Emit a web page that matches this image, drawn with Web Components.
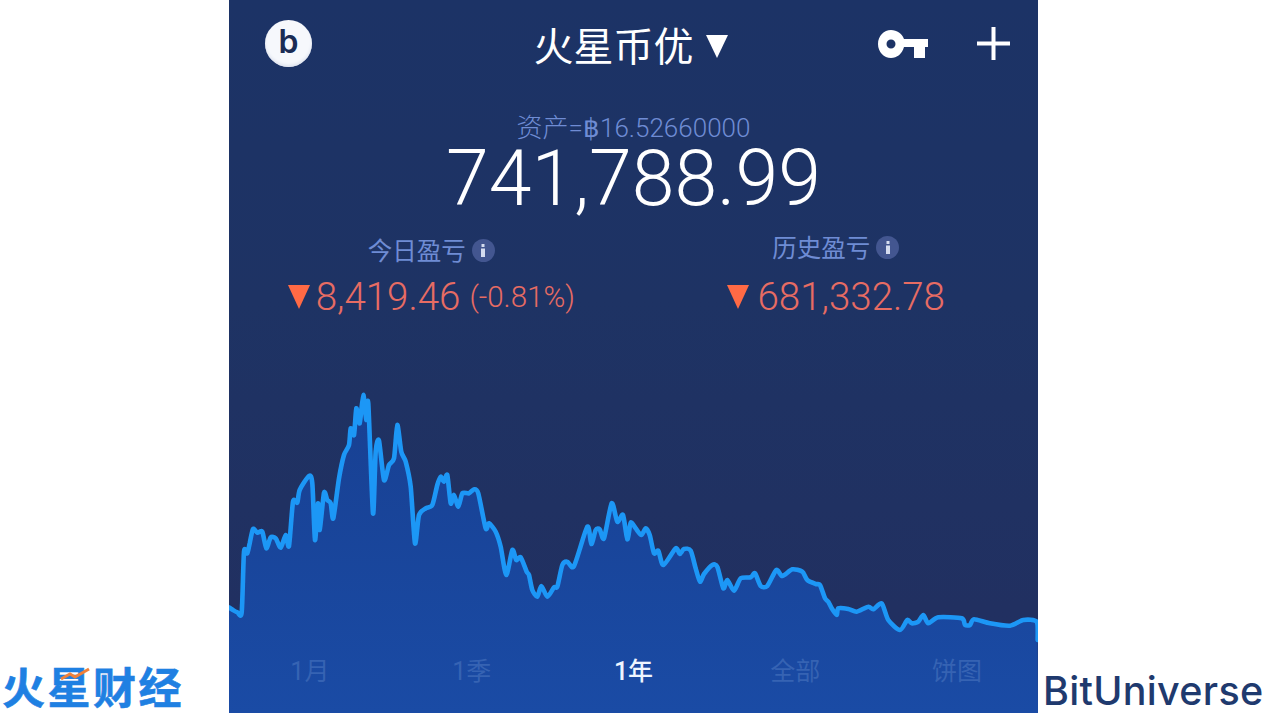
<!DOCTYPE html>
<html lang="zh">
<head>
<meta charset="utf-8">
<title>火星币优</title>
<style>
  html, body { margin: 0; height: 100%; background: #fff; overflow: hidden; }
  body { font-family: Roboto, "Noto Sans CJK SC", sans-serif; }
</style>
</head>
<body>
<asset-page>
  <mars-logo slot="left">火星财经</mars-logo>
  <phone-screen>
    <top-bar title="火星币优"></top-bar>
    <asset-summary btc="资产=฿16.52660000" total="741,788.99"></asset-summary>
    <pnl-row>
      <pnl-stat label="今日盈亏" value="8,419.46" pct="(-0.81%)"></pnl-stat>
      <pnl-stat label="历史盈亏" value="681,332.78" raised></pnl-stat>
    </pnl-row>
    <area-chart>
      <range-tabs></range-tabs>
    </area-chart>
  </phone-screen>
  <bit-logo slot="right">BitUniverse</bit-logo>
</asset-page>

<script>
// Page frame: white sides with the phone shot in the middle
class AssetPage extends HTMLElement {
  constructor() {
    super();
    this.attachShadow({ mode: "open" });
    this.shadowRoot.innerHTML = `
      <style>
        :host { display: grid; grid-template-columns: 229px 809px 229px; height: 713px; }
        .side { display: flex; align-items: flex-end; min-width: 0; }
      </style>
      <div class="side"><slot name="left"></slot></div>
      <slot></slot>
      <div class="side"><slot name="right"></slot></div>`;
  }
}

class MarsLogo extends HTMLElement {
  constructor() {
    super();
    this.attachShadow({ mode: "open" });
    this.shadowRoot.innerHTML = `
      <style>
        :host {
          display: block; position: relative; padding-left: 2px; height: 55px;
          font: 700 43px/63px "Liberation Sans", "Noto Sans CJK SC", sans-serif;
          letter-spacing: 2.5px; color: #1f80e2; white-space: nowrap;
          -webkit-text-stroke: 0.6px #1f80e2;
        }
        svg { position: absolute; left: 58px; top: 9px; }
      </style>
      <slot></slot>
      <svg width="34" height="14" viewBox="0 0 34 14">
        <path d="M3 12 L12 7 L17 10 L31 2" fill="none" stroke="#f0813a" stroke-width="3"/>
      </svg>`;
  }
}

class BitLogo extends HTMLElement {
  constructor() {
    super();
    this.attachShadow({ mode: "open" });
    this.shadowRoot.innerHTML = `
      <style>
        :host {
          display: block; padding-left: 5px; height: 44px;
          font: 500 39.500px/45px Inter, "Liberation Sans", sans-serif; letter-spacing: 0.3px;
          color: #1f3a6e; white-space: nowrap;
        }
      </style>
      <slot></slot>`;
  }
}

class PhoneScreen extends HTMLElement {
  constructor() {
    super();
    this.attachShadow({ mode: "open" });
    this.shadowRoot.innerHTML = `
      <style>
        :host {
          display: flex; flex-direction: column; height: 713px; overflow: hidden;
          background: linear-gradient(#1c3366, #1e3364 300px, #222f60);
          font-family: Roboto, "Noto Sans CJK SC", sans-serif;
        }
        ::slotted(area-chart) { margin-top: auto; }
      </style>
      <slot></slot>`;
  }
}

class TopBar extends HTMLElement {
  constructor() {
    super();
    this.attachShadow({ mode: "open" });
    this.shadowRoot.innerHTML = `
      <style>
        :host {
          display: grid; grid-template-columns: 1fr auto 1fr; align-items: center;
          height: 87px; padding: 0 28px 0 36px; color: #fff;
        }
        .avatar {
          width: 47px; height: 47px; border-radius: 50%; background: #f6f8fc; color: #1a2c55;
          display: flex; align-items: center; justify-content: center;
          font: 600 32px/1 Inter, sans-serif; padding-bottom: 3px; box-sizing: border-box;
          box-shadow: inset 0 -2px 3px #dfe4ef;
        }
        .title { display: flex; align-items: center; gap: 12px; font-size: 40px; line-height: 50px; font-family: "Noto Sans CJK SC", sans-serif; font-weight: 400; margin-left: -14px; }
        .title svg { margin-top: 5px; }
        .actions { display: flex; justify-content: flex-end; align-items: center; gap: 49px; }
        svg { display: block; }
      </style>
      <div><div class="avatar">b</div></div>
      <div class="title"><span>${this.getAttribute("title")}</span>
        <svg width="22" height="24" viewBox="0 0 22 24"><path d="M0 1H22L11 24Z" fill="#fff"/></svg>
      </div>
      <div class="actions">
        <svg width="50" height="28" viewBox="0 0 50 28">
          <path fill="#fff" fill-rule="evenodd" d="M13 0C19 0 24 3.500 26 9H50V17H47V28H36V17H26C24 24 19 28 13 28C6 28 0 22 0 14S6 0 13 0ZM13 9.500A4.500 4.500 0 1 0 13 18.500A4.500 4.500 0 1 0 13 9.500Z"/>
        </svg>
        <svg width="33" height="33" viewBox="0 0 33 33"><path d="M16.500 0V33M0 16.500H33" stroke="#fff" stroke-width="4"/></svg>
      </div>`;
  }
}

class AssetSummary extends HTMLElement {
  constructor() {
    super();
    this.attachShadow({ mode: "open" });
    this.shadowRoot.innerHTML = `
      <style>
        :host { display: block; text-align: center; height: 146px; }
        .btc { font: 300 26px/32px Roboto, "Noto Sans CJK SC", sans-serif; color: #6f8cd4; padding-top: 25px; margin-bottom: -1px; }
        .total { font: 300 77px/72px Roboto, sans-serif; color: #fff; }
      </style>
      <div class="btc">${this.getAttribute("btc")}</div>
      <div class="total">${this.getAttribute("total")}</div>`;
  }
}

class PnlRow extends HTMLElement {
  constructor() {
    super();
    this.attachShadow({ mode: "open" });
    this.shadowRoot.innerHTML = `
      <style>:host { display: grid; grid-template-columns: 1fr 1fr; }</style>
      <slot></slot>`;
  }
}

class PnlStat extends HTMLElement {
  constructor() {
    super();
    this.attachShadow({ mode: "open" });
    const pct = this.getAttribute("pct");
    this.shadowRoot.innerHTML = `
      <style>
        :host { display: flex; flex-direction: column; align-items: center; color: #e76c63; }
        .label {
          display: flex; align-items: center; gap: 6px; height: 34px; color: #6f8cd4;
          font: 400 24.500px/34px "Noto Sans CJK SC", sans-serif;
          ${this.hasAttribute("raised") ? "margin-top: -3px; margin-bottom: 3px;" : ""}
        }
        .dot {
          width: 23px; height: 23px; border-radius: 50%; background: #435690;
          display: flex; align-items: center; justify-content: center;
        }
        .value { display: flex; align-items: center; height: 54px; margin-top: 3px; white-space: nowrap; }
        .num { font: 300 38.500px/54px Roboto, sans-serif; margin-left: 6px; }
        .raised { margin-left: 9px; }
        .pct { font: 300 29.500px/54px Roboto, sans-serif; margin-left: 9px; }
      </style>
      <div class="label"><span>${this.getAttribute("label")}</span>
        <span class="dot"><svg width="6" height="13" viewBox="0 0 6 13"><path fill="#d5dcef" d="M1.500 0h3v3h-3zM1 4.500h4V13H1z"/></svg></span>
      </div>
      <div class="value">
        <svg width="22" height="24" viewBox="0 0 22 24"><path d="M0 0H22L11 24Z" fill="#ff6a45"/></svg>
        <span class="num ${this.hasAttribute("raised") ? "raised" : ""}">${this.getAttribute("value")}</span>
        ${pct ? `<span class="pct">${pct}</span>` : ""}
      </div>`;
  }
}

// Chart points traced from crops of the shot, [offsetX, offsetY, pts] with pts at 3x
const TRACE = [
  [0, 0, [0,682,12,690,25,697,38,697,45,515,55,520,62,490,72,447,85,458,100,455,112,505,125,472,140,475,155,503,170,465,180,498,192,365,205,368,212,330,240,288,250,310,258,480,267,370,272,450,285,338,295,360,305,370,313,415,330,295,345,225,360,195,365,145,375,165,382,85,392,130,403,45,412,120,418,70,432,400,440,215,450,182,465,300,480,255,495,235,505,135,517,215,530,245,545,320,558,490,570,405,590,385,610,375,625,315,635,290,645,305,655,285,665,370,675,345,688,380,700,340,720,340,735,328,748,340,770,445,780,430,800,455,815,500,832,585,850,510,862,540,875,532,893,575]],
  [300, 100, [0,285,10,330,25,350,37,318,55,350,75,322,85,320,100,255,115,245,135,258,175,140,187,192,200,150,212,148,225,175,248,70,265,125,282,105,295,178,305,128,320,145,337,165,350,145,362,165,375,220,388,212,403,255,440,205,452,222,465,207,485,212,500,265,513,305,525,282,550,255,565,260,583,325,595,300,615,332,635,295,665,292,678,280,695,318,715,318,742,270,760,288,790,268,820,275,835,300,860,312]],
  [591, 180, [0,75,15,115,25,125,35,145,50,165,55,145,85,147,110,155,145,140,160,148,185,130,205,180,240,210,262,180,275,190,295,185,310,165,325,190,355,172,425,175,435,195,450,195,462,178,510,190,570,197,610,180,650,185,653,240]],
];

class AreaChart extends HTMLElement {
  constructor() {
    super();
    this.attachShadow({ mode: "open" });
    const pts = [];
    TRACE.forEach(([ox, oy, list]) => {
      for (let i = 0; i < list.length; i += 2) {
        pts.push([ox + list[i] / 3, oy + list[i + 1] / 3]);
      }
    });
    // catmull-rom through every traced point, kept tight so the spikes survive
    const k = 0.12;
    let line = "M" + pts[0].join(" ");
    for (let i = 0; i < pts.length - 1; i++) {
      const a = pts[i - 1] || pts[i], b = pts[i], c = pts[i + 1], d = pts[i + 2] || c;
      const c1 = [b[0] + (c[0] - a[0]) * k, b[1] + (c[1] - a[1]) * k];
      const c2 = [c[0] - (d[0] - b[0]) * k, c[1] - (d[1] - b[1]) * k];
      line += ` C${c1[0].toFixed(1)} ${c1[1].toFixed(1)} ${c2[0].toFixed(1)} ${c2[1].toFixed(1)} ${c[0].toFixed(1)} ${c[1].toFixed(1)}`;
    }
    this.shadowRoot.innerHTML = `
      <style>
        :host { display: block; position: relative; height: 333px; }
        svg { display: block; }
        .tabs { position: absolute; left: 0; right: 0; bottom: 0; }
      </style>
      <svg width="809" height="333" viewBox="0 0 809 333">
        <defs>
          <linearGradient id="fill" x1="0" y1="0" x2="0" y2="1">
            <stop offset="0" stop-color="#184092"/>
            <stop offset="1" stop-color="#1a4ba5"/>
          </linearGradient>
          <filter id="soft"><feGaussianBlur stdDeviation="0.6"/></filter>
        </defs>
        <path d="${line} L809 333 L0 333 Z" fill="url(#fill)"/>
        <path d="${line}" fill="none" stroke="#1f97f6" stroke-width="4.600" stroke-linejoin="round" stroke-linecap="round" filter="url(#soft)"/>
      </svg>
      <div class="tabs"><slot></slot></div>`;
  }
}

class RangeTabs extends HTMLElement {
  constructor() {
    super();
    this.attachShadow({ mode: "open" });
    const tabs = ["1月", "1季", "1年", "全部", "饼图"];
    this.shadowRoot.innerHTML = `
      <style>
        :host {
          display: grid; grid-template-columns: repeat(5, 1fr); height: 84px;
          font: 400 25px/86px Roboto, "Noto Sans CJK SC", sans-serif; color: #3663b3; text-align: center;
        }
        .on { color: #eef5ff; font-weight: 500; }
      </style>
      ${tabs.map((t, i) => `<div class="${i === 2 ? "on" : ""}">${t}</div>`).join("")}`;
  }
}

customElements.define("asset-page", AssetPage);
customElements.define("mars-logo", MarsLogo);
customElements.define("bit-logo", BitLogo);
customElements.define("phone-screen", PhoneScreen);
customElements.define("top-bar", TopBar);
customElements.define("asset-summary", AssetSummary);
customElements.define("pnl-row", PnlRow);
customElements.define("pnl-stat", PnlStat);
customElements.define("area-chart", AreaChart);
customElements.define("range-tabs", RangeTabs);
</script>
</body>
</html>
